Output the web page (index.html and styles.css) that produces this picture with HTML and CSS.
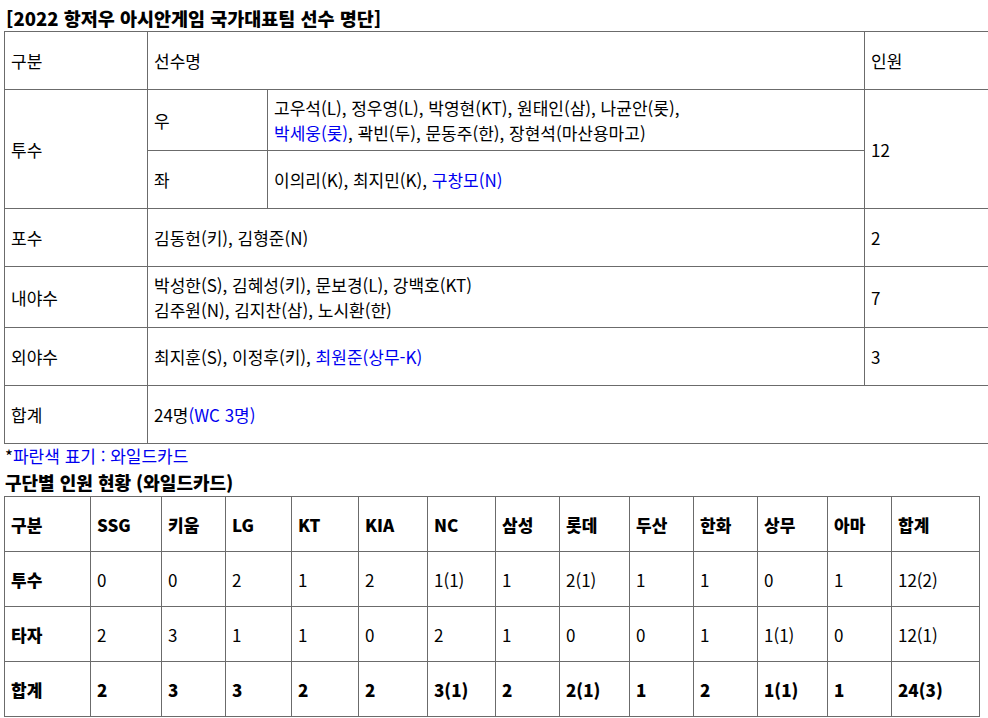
FILE: index.html
```html
<!DOCTYPE html>
<html lang="ko">
<head>
<meta charset="utf-8">
<title>2022 항저우 아시안게임 국가대표팀 선수 명단</title>
<link rel="stylesheet" href="styles.css">
</head>
<body>
<div class="page">
  <div class="title">[2022 항저우 아시안게임 국가대표팀 선수 명단]</div>
  <div class="wrap">
    <table class="roster">
      <colgroup>
        <col class="c-pos">
        <col class="c-hand">
        <col class="c-names">
        <col class="c-count">
      </colgroup>
      <tr>
        <td>구분</td>
        <td colspan="2">선수명</td>
        <td>인원</td>
      </tr>
      <tr class="tall">
        <td rowspan="2">투수</td>
        <td>우</td>
        <td>고우석(L), 정우영(L), 박영현(KT), 원태인(삼), 나균안(롯),<br><span class="wc">박세웅(롯)</span>, 곽빈(두), 문동주(한), 장현석(마산용마고)</td>
        <td rowspan="2">12</td>
      </tr>
      <tr>
        <td>좌</td>
        <td>이의리(K), 최지민(K), <span class="wc">구창모(N)</span></td>
      </tr>
      <tr>
        <td>포수</td>
        <td colspan="2">김동헌(키), 김형준(N)</td>
        <td>2</td>
      </tr>
      <tr class="tall">
        <td>내야수</td>
        <td colspan="2">박성한(S), 김혜성(키), 문보경(L), 강백호(KT)<br>김주원(N), 김지찬(삼), 노시환(한)</td>
        <td>7</td>
      </tr>
      <tr>
        <td>외야수</td>
        <td colspan="2">최지훈(S), 이정후(키), <span class="wc">최원준(상무-K)</span></td>
        <td>3</td>
      </tr>
      <tr>
        <td>합계</td>
        <td colspan="3">24명<span class="wc">(WC 3명)</span></td>
      </tr>
    </table>
  </div>
  <div class="note">*<span class="wc">파란색 표기 : 와일드카드</span></div>
  <div class="subtitle">구단별 인원 현황 (와일드카드)</div>
  <table class="teams">
    <colgroup>
      <col style="width:86px">
      <col style="width:71px">
      <col style="width:64px">
      <col style="width:66px">
      <col style="width:67px">
      <col style="width:69px">
      <col style="width:68px">
      <col style="width:64px">
      <col style="width:70px">
      <col style="width:64px">
      <col style="width:64px">
      <col style="width:70px">
      <col style="width:64px">
      <col style="width:88px">
    </colgroup>
    <tr class="b">
      <td>구분</td><td>SSG</td><td>키움</td><td>LG</td><td>KT</td><td>KIA</td><td>NC</td><td>삼성</td><td>롯데</td><td>두산</td><td>한화</td><td>상무</td><td>아마</td><td>합계</td>
    </tr>
    <tr>
      <td class="bc">투수</td><td>0</td><td>0</td><td>2</td><td>1</td><td>2</td><td>1(1)</td><td>1</td><td>2(1)</td><td>1</td><td>1</td><td>0</td><td>1</td><td>12(2)</td>
    </tr>
    <tr>
      <td class="bc">타자</td><td>2</td><td>3</td><td>1</td><td>1</td><td>0</td><td>2</td><td>1</td><td>0</td><td>0</td><td>1</td><td>1(1)</td><td>0</td><td>12(1)</td>
    </tr>
    <tr class="b">
      <td>합계</td><td>2</td><td>3</td><td>3</td><td>2</td><td>2</td><td>3(1)</td><td>2</td><td>2(1)</td><td>1</td><td>2</td><td>1(1)</td><td>1</td><td>24(3)</td>
    </tr>
  </table>
</div>
</body>
</html>
```

FILE: styles.css
```css
html, body {
  margin: 0;
  padding: 0;
  background: #fff;
  overflow: hidden;
}

body {
  font-family: "Noto Sans CJK KR", "Noto Sans", sans-serif;
  font-size: 17px;
  color: #000;
}

.page {
  padding-left: 4px;
}

.title {
  padding-top: 6px;
  padding-left: 2px;
  line-height: 25px;
  font-size: 18.5px;
  font-weight: 900;
}

.wrap {
  width: 990px;
}

table {
  border-collapse: collapse;
  table-layout: fixed;
}

td {
  border: 1px solid #6b6b6b;
  padding: 5px 6px;
  line-height: 25px;
  vertical-align: middle;
  text-align: left;
}

.roster {
  width: 990px;
}

.roster td {
  height: 47px;
}

.c-pos { width: 143px; }
.c-hand { width: 120px; }
.c-names { width: 597px; }
.c-count { width: 130px; }

.wc {
  color: #0000f0;
}

.note {
  line-height: 24px;
  padding-left: 1px;
}

.subtitle {
  line-height: 28px;
  font-size: 18px;
  font-weight: 900;
  padding-left: 1px;
}

.teams {
  width: 975px;
}

.teams td {
  height: 44px;
}

.teams .b td,
.teams td.bc {
  font-weight: 900;
}
```
